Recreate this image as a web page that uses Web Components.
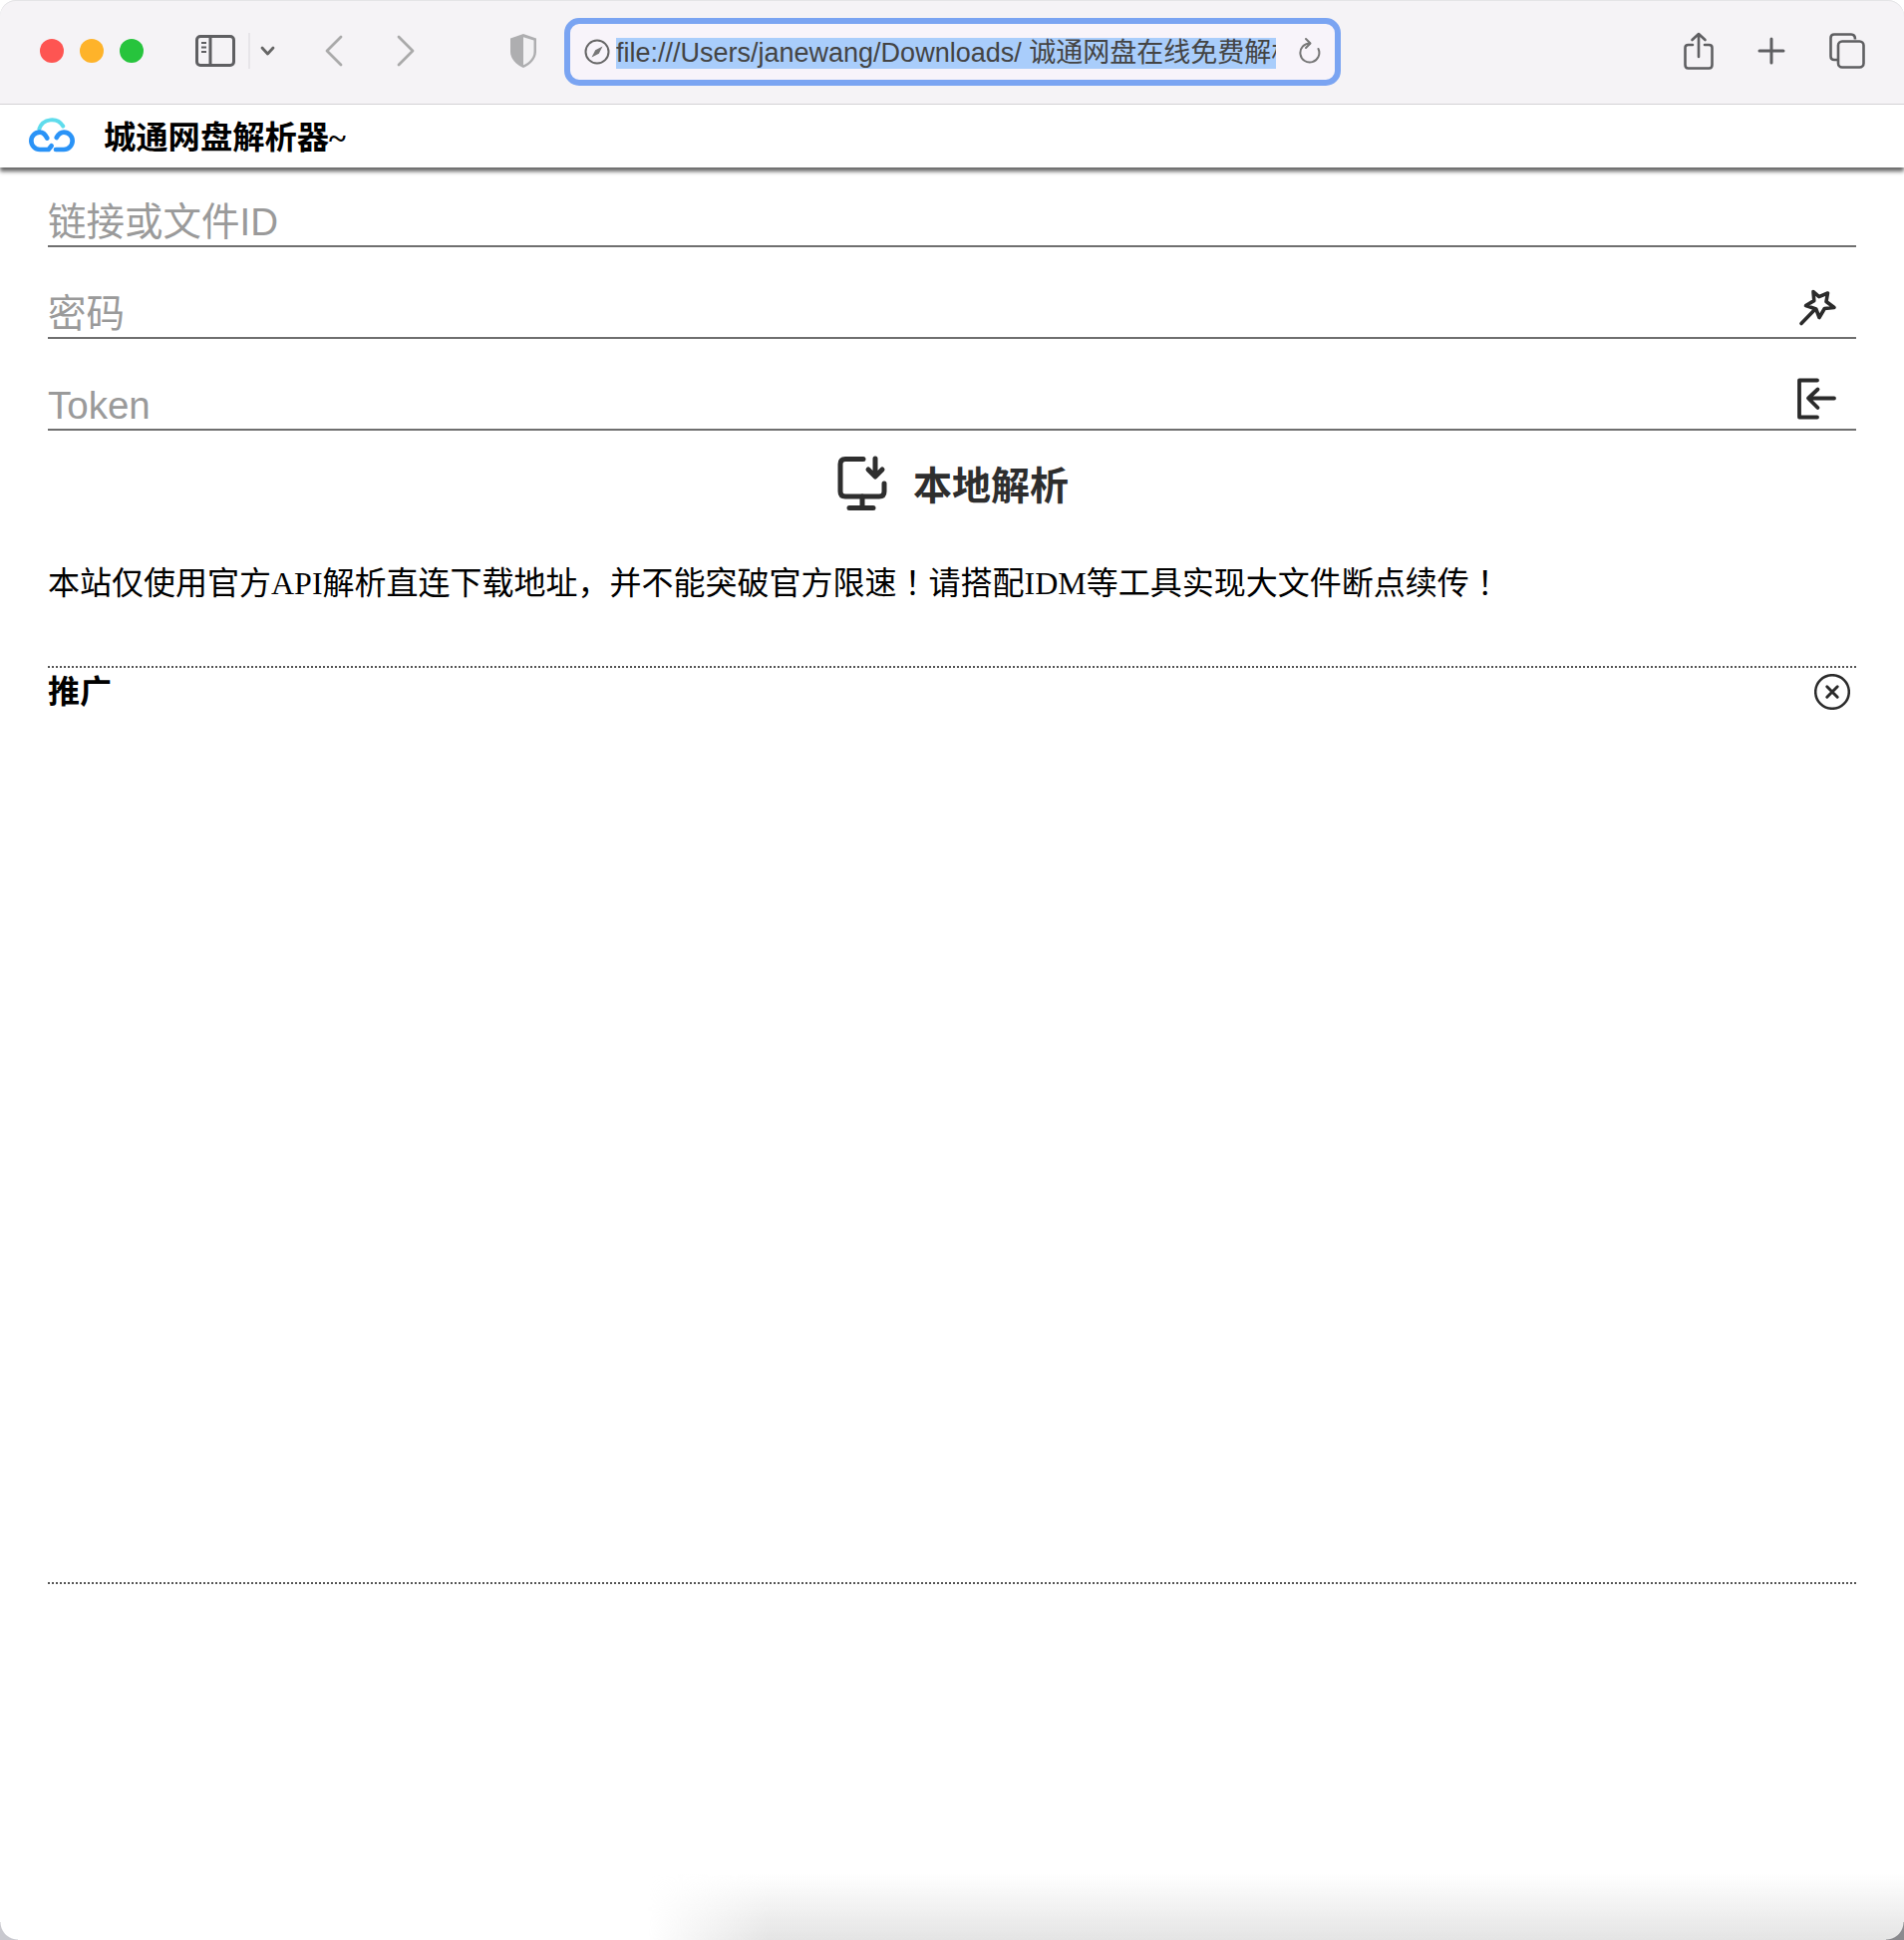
<!DOCTYPE html>
<html lang="zh-CN"><head><meta charset="utf-8"><title>诚通网盘解析器</title>
<style>
html,body{margin:0;padding:0;background:#fff;}
body{width:1910px;height:1946px;overflow:hidden;position:relative;font-family:"Liberation Serif","Noto Sans CJK SC",serif;}
.bang{font-family:"Noto Sans CJK TC",sans-serif;}
</style></head><body>
<safari-toolbar></safari-toolbar>
<app-header>城通网盘解析器~</app-header>
<app-main>
  <text-field>链接或文件ID</text-field>
  <text-field>密码<svg slot="icon" style="margin-left:2px" width="40" height="40" viewBox="0 0 40 40" fill="none" stroke="#2b2b2b" stroke-width="3.6" stroke-linejoin="round" stroke-linecap="round"><path d="M15 3.500 20.800 8.600 29.500 5 28 13.500 36 19.500 26.300 20.500 21 29.500 17.800 21 7.500 17.500 15.800 12.600Z"/><path d="M16.800 21.300 3 35.500"/></svg></text-field>
  <text-field>Token<svg slot="icon" width="40" height="42" viewBox="0 0 40 42" fill="none" stroke="#2b2b2b" stroke-width="3.8" stroke-linejoin="round" stroke-linecap="round"><path d="M21 2.500H3V39.500H21"/><path d="M38 20.500H13M21.500 11.500 12 20.500 21.500 30"/></svg></text-field>
  <parse-button>本地解析</parse-button>
  <notice-text>本站仅使用官方API解析直连下载地址，并不能突破官方限速<span class="bang" lang="zh-TW">！</span>请搭配IDM等工具实现大文件断点续传<span class="bang" lang="zh-TW">！</span></notice-text>
  <promo-box>推广</promo-box>
</app-main>
<window-edge></window-edge>
<script>
function def(name, html){
  customElements.define(name, class extends HTMLElement{
    constructor(){super();this.attachShadow({mode:'open'}).innerHTML=html;}
  });
}
def('safari-toolbar',`<style>
:host{display:block;height:105px;box-sizing:border-box;background:#f5f3f6;border-bottom:1px solid #d6d4d8;border-radius:16px 16px 0 0;box-shadow:inset 0 1px 0 #e4e4e6;}
.bar{height:104px;display:flex;align-items:center;box-sizing:border-box;padding:0 39px 2px 40px;}
.dot{width:24px;height:24px;border-radius:50%;margin-right:16px;flex:none;}
svg{display:block;flex:none;}
.url{flex:none;width:779px;height:68px;box-sizing:border-box;border:6px solid #7aa4f2;border-radius:15px;background:#f8f4fa;display:flex;align-items:center;padding:0 8px 0 14px;margin:2px 0 0 0;}
.text{flex:none;width:662px;height:31px;background:#a9cdfb;color:#444;font:27px/31px "Liberation Sans","Noto Sans CJK SC",sans-serif;white-space:nowrap;overflow:hidden;margin:2px 0 0 6px;}
</style><div class="bar">
<span class="dot" style="background:#fe5552"></span><span class="dot" style="background:#feb32a"></span><span class="dot" style="background:#27c43d;margin-right:0"></span>
<svg style="margin-left:52px" width="40" height="32" viewBox="0 0 40 32" fill="none" stroke="#5f5f62" stroke-width="3"><rect x="1.500" y="1.500" width="37" height="29" rx="3.500"/><path d="M15 1.500V30.500"/><path d="M6 8h5M6 12.500h5M6 17h5" stroke-width="2"/></svg>
<svg style="margin-left:13px" width="2" height="36" viewBox="0 0 2 36"><path d="M1 0V36" stroke="#e2e0e4" stroke-width="1.500"/></svg>
<svg style="margin-left:10px" width="15" height="12" viewBox="0 0 15 12" fill="none" stroke="#666" stroke-width="2.800" stroke-linecap="round" stroke-linejoin="round"><path d="M2 3 7.500 9 13 3"/></svg>
<svg style="margin-left:49px" width="20" height="32" viewBox="0 0 20 32" fill="none" stroke="#aaa" stroke-width="2.800" stroke-linecap="round" stroke-linejoin="round"><path d="M17 2 3 16 17 30"/></svg>
<svg style="margin-left:52px" width="20" height="32" viewBox="0 0 20 32" fill="none" stroke="#aaa" stroke-width="2.800" stroke-linecap="round" stroke-linejoin="round"><path d="M3 2 17 16 3 30"/></svg>
<svg style="margin-left:94px" width="28" height="36" viewBox="0 0 28 36"><path d="M14 1 27 5.500V19C27 26 21 32 14 35 7 32 1 26 1 19V5.500Z" fill="#aeaeb0"/><path d="M14 4.200 24.500 7.500V19C24.500 25 20 29.500 14 32.300Z" fill="#f2f1f3"/></svg>
<div class="url" style="margin-left:27px">
<svg width="26" height="26" viewBox="0 0 26 26" fill="none"><circle cx="13" cy="13" r="11.500" stroke="#666" stroke-width="2"/><path d="M18.500 7.500 14.800 14.800 7.500 18.500 11.200 11.200Z" fill="#777"/></svg>
<div class="text">file:///Users/janewang/Downloads/ 诚通网盘在线免费解析</div>
<svg style="margin-left:21px" width="24" height="30" viewBox="0 0 24 30" fill="none" stroke="#777" stroke-width="2" stroke-linecap="round" stroke-linejoin="round"><path d="M13 6.500A9.500 9.500 0 1 0 21.500 12"/><path d="M9 2 13.500 6.500 9 11"/></svg>
</div>
<span style="flex:1"></span>
<svg width="30" height="38" viewBox="0 0 30 38" fill="none" stroke="#5f5f62" stroke-width="2.600" stroke-linecap="round" stroke-linejoin="round"><path d="M9 13H4.500Q1.500 13 1.500 16V33Q1.500 36.500 4.500 36.500H25.500Q28.500 36.500 28.500 33V16Q28.500 13 25.500 13H21"/><path d="M15 25V2M8.500 8 15 2 21.500 8"/></svg>
<svg style="margin-left:44px" width="28" height="28" viewBox="0 0 28 28" fill="none" stroke="#5f5f62" stroke-width="3" stroke-linecap="round"><path d="M14 2V26M2 14H26"/></svg>
<svg style="margin-left:44px" width="36" height="36" viewBox="0 0 36 36" fill="none" stroke="#5f5f62" stroke-width="2.600" stroke-linejoin="round"><path d="M9 27H5Q1.500 27 1.500 23.500V5Q1.500 1.500 5 1.500H22Q26 1.500 26 6.500"/><rect x="9" y="8.500" width="25.500" height="26" rx="4"/></svg>
</div>`);
def('app-header',`<style>
:host{display:block;position:relative;height:63px;background:#fff;box-shadow:0 4px 4px rgba(0,0,0,.6);}
.h{height:63px;display:flex;align-items:center;padding-left:29px;font:bold 32.3px/42px "Liberation Serif","Noto Sans CJK SC",serif;color:#000;}
.h span{position:relative;top:1px;}
svg{display:block;margin-right:28px;margin-top:-3px;}
</style><div class="h"><svg width="47" height="38" viewBox="27 24 141 114" fill="none" stroke-linecap="round" stroke-linejoin="round"><path d="M58 64A40 40 0 0 1 130 56" stroke="#5fdcec" stroke-width="12"/><path d="M82 92C76 80 70 74 60 74A26 26 0 0 0 60 126H86L95 115" stroke="#2a93f7" stroke-width="14"/><path d="M108 126H132A26 26 0 0 0 132 74C122 74 116 80 110 90" stroke="#2a93f7" stroke-width="14"/></svg><span><slot></slot></span></div>`);
def('app-main',`<style>
:host{display:block;padding:0 48px 0 48px;}
.f{display:grid;gap:12px;}
</style><div class="f"><slot></slot></div>`);
def('text-field',`<style>
:host{display:flex;height:80px;box-sizing:border-box;border-bottom:2px solid #6f6f6f;align-items:flex-end;color:#9a9a9a;font:38.5px/46px "Liberation Sans","Noto Sans CJK SC",sans-serif;}
.t{flex:1;}
.i{flex:none;width:60px;align-self:flex-end;padding-bottom:9px;display:flex;}
</style><span class="t"><slot></slot></span><span class="i"><slot name="icon"></slot></span>`);
def('parse-button',`<style>
:host{display:flex;justify-content:center;align-items:center;gap:26px;height:82px;color:#2e2e2e;font:bold 39px/50px "Noto Sans CJK SC",sans-serif;margin-top:-12px;padding:12px 0 0 2px;}
svg{display:block;}
span{position:relative;top:-1px;}
</style><svg width="50" height="56" viewBox="0 0 50 56" fill="none" stroke="#2e2e2e" stroke-width="5" stroke-linecap="round" stroke-linejoin="round"><path d="M26 3.500H8Q3 3.500 3 8.500V36Q3 41 8 41H42Q47 41 47 36V28"/><path d="M12 52.500H36M25 41V52"/><path d="M38 3V20M31 14 38 21 45 14"/></svg><span><slot></slot></span>`);
def('notice-text',`<style>
:host{display:block;margin-top:-12px;padding-top:30px;height:142px;box-sizing:border-box;color:#000;font:32px/52px "Liberation Serif","Noto Sans CJK SC",serif;white-space:nowrap;}
</style><slot></slot>`);
def('promo-box',`<style>
:host{display:block;margin-top:-12px;height:921px;box-sizing:border-box;border-top:2px dotted #555;border-bottom:2px dotted #555;}
.r{display:flex;justify-content:space-between;align-items:center;height:48px;padding-right:6px;font:bold 32px/48px "Liberation Serif","Noto Sans CJK SC",serif;color:#000;}
svg{display:block;}
</style><div class="r"><span><slot></slot></span><svg width="36" height="36" viewBox="0 0 36 36" fill="none" stroke="#2b2b2b" stroke-linecap="round"><circle cx="18" cy="18" r="16.800" stroke-width="2.500"/><path d="M12.800 12.800 23.200 23.200M23.200 12.800 12.800 23.200" stroke-width="3"/></svg></div>`);
def('window-edge',`<style>
:host{display:block;}
.g{position:absolute;left:650px;right:0;top:1880px;bottom:0;background:linear-gradient(to bottom,rgba(226,226,226,0),#e4e4e4);-webkit-mask-image:linear-gradient(to right,transparent,#000 120px);mask-image:linear-gradient(to right,transparent,#000 120px);}
.bl,.br{position:absolute;bottom:0;width:18px;height:18px;}
.bl{left:0;background:radial-gradient(circle at 100% 0,transparent 17px,#c9c9cf 18px);}
.br{right:0;background:radial-gradient(circle at 0 0,transparent 17px,#8a8a8e 18px);}
</style><div class="g"></div><div class="bl"></div><div class="br"></div>`);
</script>
</body></html>
